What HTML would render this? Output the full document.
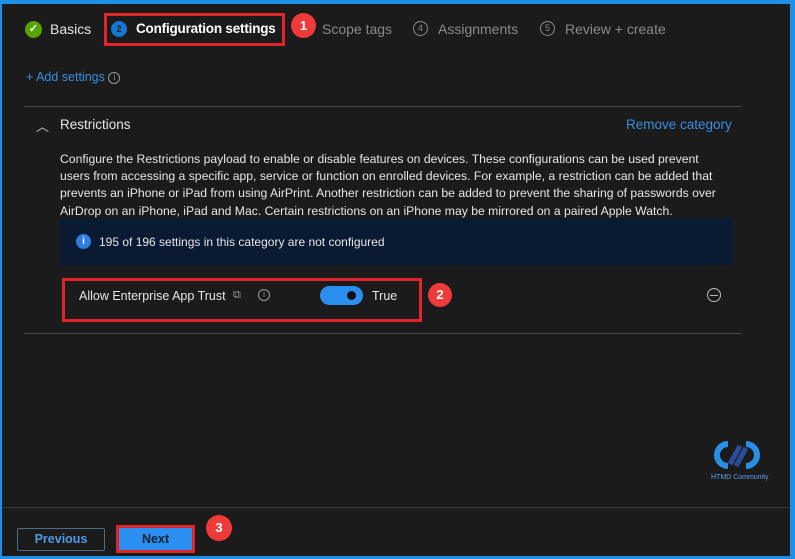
<!DOCTYPE html>
<html><head><meta charset="utf-8"><style>
*{margin:0;padding:0;box-sizing:border-box}
body{width:795px;height:559px;background:#1e90e8;overflow:hidden;font-family:"Liberation Sans",sans-serif;position:relative}
#main{position:absolute;left:2px;top:4px;width:788px;height:552px;background:#1b1b1b}
.a{position:absolute;white-space:nowrap}
.t{color:#e6e6e6;font-size:13px}
.g{color:#8a8a8a;font-size:13px}
.badge{position:absolute;width:22px;height:22px;border-radius:50%;background:#ef3a3a;color:#fff;font-size:13px;font-weight:bold;text-align:center;line-height:22px}
.circ{position:absolute;width:15px;height:15px;border-radius:50%;border:1px solid #8a8a8a;color:#8a8a8a;font-size:9px;text-align:center;line-height:13px}
.red{position:absolute;border:3px solid #e0242a}
</style></head><body>
<div id="main"></div>
<div class="a" style="left:25px;top:21px;width:17px;height:17px;border-radius:50%;background:#57a300;color:#fff;font-size:11px;text-align:center;line-height:17px;font-weight:bold">✓</div>
<div class="a t" style="left:50px;top:21px;font-size:14px">Basics</div>
<div class="red" style="left:104px;top:13px;width:181px;height:33px"></div>
<div class="a" style="left:111px;top:21px;width:16px;height:16px;border-radius:50%;background:#1677d2;color:#1b1b1b;font-size:9px;text-align:center;line-height:16px;font-weight:bold">2</div>
<div class="a" style="left:136px;top:21px;color:#fff;font-size:13.5px;font-weight:bold;letter-spacing:-0.2px">Configuration settings</div>
<div class="badge" style="left:291px;top:13px;width:25px;height:25px;line-height:25px">1</div>
<div class="a g" style="left:322px;top:21px;font-size:14px">Scope tags</div>
<div class="circ" style="left:413px;top:21px">4</div>
<div class="a g" style="left:438px;top:21px;font-size:14px">Assignments</div>
<div class="circ" style="left:540px;top:21px">5</div>
<div class="a g" style="left:565px;top:21px;font-size:14px">Review + create</div>
<div class="a" style="left:26px;top:70px;color:#3a8ee0;font-size:12.5px">+ Add settings <span style="display:inline-block;width:12px;height:12px;border:1px solid #999;border-radius:50%;color:#999;font-size:8px;text-align:center;line-height:10px;vertical-align:1px">i</span></div>
<div class="a" style="left:24px;top:106px;width:717px;height:1px;background:#4a4a4a"></div>
<div class="a" style="left:36px;top:116px;color:#ccc;font-size:13px">︿</div>
<div class="a t" style="left:60px;top:117px;font-size:13.5px">Restrictions</div>
<div class="a" style="left:626px;top:117px;color:#3a8ee0;font-size:13.5px">Remove category</div>
<div class="a t" style="left:60px;top:151px;font-size:12.2px;line-height:17.2px;white-space:normal;width:662px">Configure the Restrictions payload to enable or disable features on devices. These configurations can be used prevent users from accessing a specific app, service or function on enrolled devices. For example, a restriction can be added that prevents an iPhone or iPad from using AirPrint. Another restriction can be added to prevent the sharing of passwords over AirDrop on an iPhone, iPad and Mac. Certain restrictions on an iPhone may be mirrored on a paired Apple Watch.</div>
<div class="a" style="left:59px;top:218px;width:674px;height:47px;background:#0a1a33"></div>
<div class="a" style="left:76px;top:234px;width:15px;height:15px;border-radius:50%;background:#2b7de0;color:#fff;font-size:10px;font-weight:bold;text-align:center;line-height:15px">i</div>
<div class="a t" style="left:99px;top:235px;font-size:12px">195 of 196 settings in this category are not configured</div>
<div class="red" style="left:62px;top:278px;width:360px;height:44px"></div>
<div class="a t" style="left:79px;top:289px;font-size:12.5px">Allow Enterprise App Trust</div>
<div class="a" style="left:233px;top:289px;color:#999;font-size:11px">⧉</div>
<div class="a" style="left:258px;top:289px;width:12px;height:12px;border:1px solid #999;border-radius:50%;color:#999;font-size:8px;text-align:center;line-height:10px">i</div>
<div class="a" style="left:320px;top:286px;width:43px;height:19px;border-radius:10px;background:#2b8ff0"></div>
<div class="a" style="left:347px;top:291px;width:9px;height:9px;border-radius:50%;background:#111"></div>
<div class="a t" style="left:372px;top:289px;font-size:12.5px">True</div>
<div class="badge" style="left:428px;top:283px;width:24px;height:24px;line-height:24px">2</div>
<div class="a" style="left:707px;top:288px;width:14px;height:14px;border:1.5px solid #bbb;border-radius:50%"></div>
<div class="a" style="left:710px;top:294.5px;width:8px;height:1.5px;background:#bbb"></div>
<div class="a" style="left:24px;top:333px;width:717px;height:1px;background:#4a4a4a"></div>
<svg class="a" style="left:708px;top:438px" width="62" height="34" viewBox="0 0 62 34"><path d="M20 6 A11 11 0 1 0 20 28" stroke="#2a8ee6" stroke-width="6" fill="none"/><path d="M38 6 A11 11 0 1 1 38 28" stroke="#2a8ee6" stroke-width="6" fill="none"/><path d="M22 26 L32 8 M28 28 L38 10" stroke="#2a4c9a" stroke-width="5"/></svg>
<div class="a" style="left:711px;top:474px;color:#5aa0e8;font-size:7px">HTMD Community</div>
<div class="a" style="left:2px;top:507px;width:788px;height:1px;background:#3a3a3a"></div>
<div class="a" style="left:17px;top:528px;width:88px;height:23px;border:1px solid #4a6c8c;border-radius:2px;color:#4d9ae6;font-size:12.5px;font-weight:bold;text-align:center;line-height:21px">Previous</div>
<div class="red" style="left:116px;top:525px;width:79px;height:28px;background:#2b8ff0;color:#102030;font-size:12.5px;font-weight:bold;text-align:center;line-height:22px">Next</div>
<div class="badge" style="left:206px;top:515px;width:26px;height:26px;line-height:26px">3</div>
</body></html>
